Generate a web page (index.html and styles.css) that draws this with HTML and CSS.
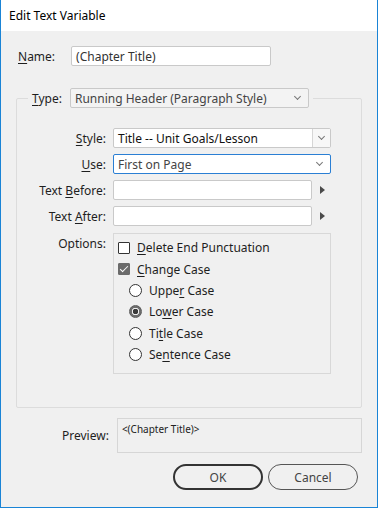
FILE: index.html
```html
<!DOCTYPE html>
<html lang="en">

<head>
    <meta charset="UTF-8">
    <meta name="viewport" content="width=device-width, initial-scale=1.0">
    <title>Edit Text Variable</title>
    <link rel="stylesheet" href="styles.css">
</head>

<body>
    <div class="dialog">
        <div class="title-bar">Edit Text Variable</div>

        <div class="dialog-body">
            <div class="name-row">
                <span class="label"><u>N</u>ame:</span>
                <div class="field name-field">(Chapter Title)</div>
            </div>

            <fieldset class="group">
                <legend>
                    <span class="label"><u>T</u>ype:</span>
                    <div class="field dropdown type-dropdown">
                        <span>Running Header (Paragraph Style)</span>
                        <span class="chevron"></span>
                    </div>
                </legend>

                <div class="form-grid">
                    <span class="label"><u>S</u>tyle:</span>
                    <div class="field combo">
                        <span class="combo-text">Title -- Unit Goals/Lesson</span>
                        <span class="combo-button"><span class="chevron"></span></span>
                    </div>

                    <span class="label"><u>U</u>se:</span>
                    <div class="field dropdown focused">
                        <span>First on Page</span>
                        <span class="chevron"></span>
                    </div>

                    <span class="label">Text <u>B</u>efore:</span>
                    <div class="field-with-menu">
                        <div class="field text-field"></div>
                        <span class="menu-arrow"></span>
                    </div>

                    <span class="label">Text <u>A</u>fter:</span>
                    <div class="field-with-menu">
                        <div class="field text-field"></div>
                        <span class="menu-arrow"></span>
                    </div>

                    <span class="label options-label">Options:</span>
                    <div class="options-box">
                        <div class="option">
                            <span class="checkbox"></span>
                            <span><u>D</u>elete End Punctuation</span>
                        </div>
                        <div class="option">
                            <span class="checkbox checked"></span>
                            <span><u>C</u>hange Case</span>
                        </div>
                        <div class="option sub">
                            <span class="radio"></span>
                            <span>Uppe<u>r</u> Case</span>
                        </div>
                        <div class="option sub">
                            <span class="radio selected"></span>
                            <span>Lo<u>w</u>er Case</span>
                        </div>
                        <div class="option sub">
                            <span class="radio"></span>
                            <span>Ti<u>t</u>le Case</span>
                        </div>
                        <div class="option sub">
                            <span class="radio"></span>
                            <span>Se<u>n</u>tence Case</span>
                        </div>
                    </div>
                </div>
            </fieldset>

            <div class="preview-row">
                <span class="label">Preview:</span>
                <div class="preview-box">&lt;(Chapter Title)&gt;</div>
            </div>

            <div class="buttons">
                <button class="default">OK</button>
                <button>Cancel</button>
            </div>
        </div>
    </div>
</body>

</html>
```

FILE: styles.css
```css
* {
    margin: 0;
    padding: 0;
    box-sizing: border-box;
}

body {
    font-family: "Noto Sans", "Open Sans", sans-serif;
    font-size: 12px;
    color: #1e1e1e;
    background: #f0f0f0;
}

u {
    text-decoration-thickness: 1px;
    text-underline-offset: 2px;
}

.dialog {
    width: 378px;
    height: 508px;
    border: 1px solid #1a84d6;
    border-top: none;
    background: #f0f0f0;
}

.title-bar {
    height: 31px;
    padding-left: 8px;
    line-height: 31px;
    background: #fff;
    color: #000;
}

.dialog-body {
    padding: 15px 15px 0;
}

.field {
    height: 20px;
    border: 1px solid #c9c9c9;
    border-radius: 2px;
    background: #fff;
    color: #333;
    display: flex;
    align-items: center;
    padding-left: 4px;
    white-space: nowrap;
}

.chevron {
    width: 5px;
    height: 5px;
    border-right: 1px solid #777;
    border-bottom: 1px solid #777;
    transform: rotate(45deg);
    margin-top: -3px;
}

/* Name */
.name-row {
    display: flex;
    align-items: center;
    gap: 16px;
    padding-left: 2px;
}

.name-field {
    width: 200px;
}

/* Group box */
.group {
    margin-top: 22px;
    border: 1px solid #dcdcdc;
    border-radius: 2px;
    padding: 0 0 33px;
    min-width: 0;
}

.group legend {
    margin-left: 11px;
    padding: 0 4px;
    display: flex;
    align-items: center;
    gap: 8px;
}

.dropdown {
    justify-content: space-between;
    padding-right: 8px;
}

.type-dropdown {
    width: 239px;
    background: #f3f3f3;
    color: #444;
}

.form-grid {
    display: grid;
    grid-template-columns: 89px 218px;
    column-gap: 7px;
    row-gap: 6px;
    padding-top: 20px;
}

.form-grid .label {
    text-align: right;
    align-self: center;
    white-space: nowrap;
}

.form-grid .options-label {
    align-self: start;
    padding-top: 3px;
}

.combo {
    padding-right: 0;
    color: #111;
}

.combo-text {
    flex: 1;
}

.combo-button {
    width: 18px;
    height: 100%;
    border-left: 1px solid #d6d6d6;
    background: #f7f7f7;
    display: flex;
    align-items: center;
    justify-content: center;
}

.focused {
    border-color: #2a7fd4;
    color: #444;
}

.field-with-menu {
    display: flex;
    align-items: center;
}

.text-field {
    width: 199px;
}

.menu-arrow {
    margin-left: 8px;
    width: 0;
    height: 0;
    border-top: 4px solid transparent;
    border-bottom: 4px solid transparent;
    border-left: 5px solid #4a4a4a;
}

/* Options */
.options-box {
    height: 141px;
    margin-top: 1px;
    border: 1px solid #d8d8d8;
    padding: 3px 0 0 4px;
}

.option {
    height: 21.4px;
    display: flex;
    align-items: center;
    gap: 7px;
}

.option.sub {
    padding-left: 11px;
}

.checkbox {
    width: 12px;
    height: 12px;
    border: 1px solid #333;
    border-radius: 1px;
    background: #fff;
    position: relative;
}

.checkbox.checked {
    border-color: #6b6b6b;
    background: #6b6b6b;
}

.checkbox.checked::after {
    content: "";
    position: absolute;
    left: 3px;
    top: 0px;
    width: 3px;
    height: 7px;
    border-right: 1.5px solid #fff;
    border-bottom: 1.5px solid #fff;
    transform: rotate(45deg);
}

.radio {
    width: 13px;
    height: 13px;
    border: 1px solid #333;
    border-radius: 50%;
    background: #fff;
}

.radio.selected {
    border-color: #5c5c5c;
    background: radial-gradient(circle, #3a3a3a 0 2.5px, #eee 3px 3.5px, #6e6e6e 4px);
}

/* Preview */
.preview-row {
    display: flex;
    align-items: center;
    gap: 8px;
    margin-top: 10px;
    padding-left: 46px;
}

.preview-box {
    width: 245px;
    height: 35px;
    border: 1px solid #d6d6d6;
    padding: 3px 0 0 4px;
    font-size: 10px;
    color: #222;
    align-self: flex-start;
}

/* Buttons */
.buttons {
    display: flex;
    justify-content: flex-end;
    gap: 5px;
    margin-top: 11px;
    padding-right: 4px;
}

button {
    width: 90px;
    height: 26px;
    border: 1px solid #555;
    border-radius: 13px;
    background: #f0f0f0;
    color: #444;
    font-family: inherit;
    font-size: 12px;
}

button.default {
    border: 2px solid #333;
}
```
